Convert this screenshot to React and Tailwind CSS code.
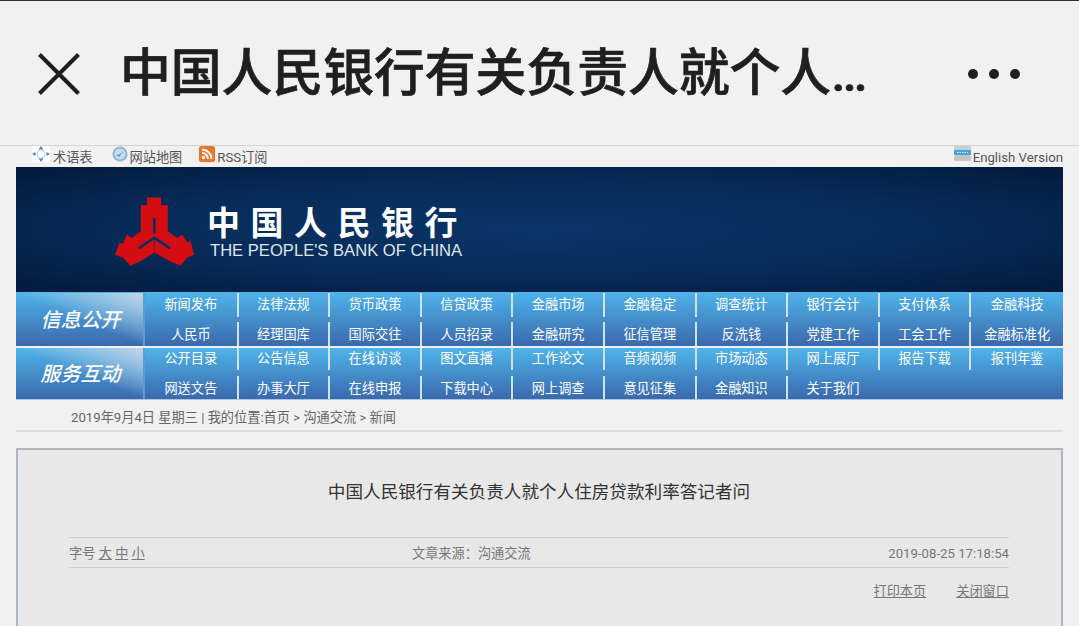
const font = "font-['Roboto','Noto_Sans_CJK_SC',sans-serif]";

const navRows = [
    {
        label: '信息公开',
        rows: [
            { height: 'h-[24px]', items: ['新闻发布', '法律法规', '货币政策', '信贷政策', '金融市场', '金融稳定', '调查统计', '银行会计', '支付体系', '金融科技'] },
            { height: 'h-[24px] pt-[2px]', items: ['人民币', '经理国库', '国际交往', '人员招录', '金融研究', '征信管理', '反洗钱', '党建工作', '工会工作', '金融标准化'] },
        ],
    },
    {
        label: '服务互动',
        rows: [
            { height: 'h-[22px]', items: ['公开目录', '公告信息', '在线访谈', '图文直播', '工作论文', '音频视频', '市场动态', '网上展厅', '报告下载', '报刊年鉴'] },
            { height: 'h-[23px] pt-[2px]', items: ['网送文告', '办事大厅', '在线申报', '下载中心', '网上调查', '意见征集', '金融知识', '关于我们', '', ''] },
        ],
    },
];

function TermIcon() {
    return (
        <svg width="18" height="16" viewBox="0 0 18 16" className="bg-white">
            <path d="M9 0l2.5 3.5h-5zM9 16l-2.5-3.5h5zM0 8l3.5-2v4zM18 8l-3.5 2V6z" fill="#4a86c8" />
            <path d="M5 8a4 4 0 0 1 8 0a4 4 0 0 1-8 0" fill="none" stroke="#b9cfe6" strokeWidth="1" />
        </svg>
    );
}

function GlobeIcon() {
    return (
        <svg width="16" height="16" viewBox="0 0 16 16">
            <circle cx="8" cy="8" r="7.5" fill="#8fb6d8" />
            <circle cx="8" cy="8" r="5.5" fill="#c9dcee" />
            <path d="M4 9l3 2 5-6-4 3z" fill="#6f9fc8" />
        </svg>
    );
}

function RssIcon() {
    return (
        <svg width="16" height="16" viewBox="0 0 16 16">
            <rect width="16" height="16" rx="2.5" fill="#e8762b" />
            <circle cx="4.5" cy="11.5" r="1.7" fill="#fff" />
            <path d="M3 7a6 6 0 0 1 6 6M3 3.5a9.5 9.5 0 0 1 9.5 9.5" fill="none" stroke="#fff" strokeWidth="1.9" />
        </svg>
    );
}

function KeyboardIcon() {
    return (
        <svg width="17" height="15" viewBox="0 0 17 15">
            <rect y="0" width="17" height="5" rx="1.5" fill="#c9ccd0" />
            <rect y="4" width="17" height="5" rx="1" fill="#45a5df" />
            <rect y="9" width="17" height="6" rx="1.5" fill="#c4c6c8" />
            <path d="M3 6.5h11" stroke="#d5eaf7" strokeWidth="1" strokeDasharray="1.5 1" />
        </svg>
    );
}

function BankLogo() {
    return (
        <svg width="79" height="70" viewBox="105 85 235 205" className="shrink-0 mt-[4px]">
            <path
                d="M200 85H242V108H262V185L290 205L305 195L320 218L330 215L340 255L318 265L300 288L270 275L225 250H220L180 275L150 288L130 265L105 255L118 220L130 222L140 195L155 205L182 185V108H200Z"
                fill="#d40d12"
            />
            <path d="M222 150V188M222 205L178 234M222 205L266 234" stroke="#0a2f5f" strokeWidth="8" strokeLinecap="round" fill="none" />
            <path d="M222 205V250" stroke="#0a2f5f" strokeWidth="2" fill="none" />
        </svg>
    );
}

function NavBlock({ label, rows, className }) {
    return (
        <div className={`flex bg-gradient-to-b from-[#4fb4ea] to-[#3a69ad] ${className}`}>
            <div className="w-[129px] shrink-0 flex items-center justify-center bg-gradient-to-tr from-transparent via-transparent to-[#c5d3e5] border-r-2 border-[#5f9ad2]">
                <span className="text-[20px] italic font-medium text-white ml-[2px]">{label}</span>
            </div>
            <div className="flex-1 flex flex-col justify-between">
                {rows.map((row, i) => (
                    <div key={i} className={`grid grid-cols-[repeat(9,91.6px)_1fr] ${row.height.split(' ')[0]}`}>
                        {row.items.map((item, j) => (
                            <div
                                key={j}
                                className={`flex items-center justify-center text-[13.2px] text-white ${i === 1 ? 'pt-[2px]' : ''} ${j > 0 && item ? 'border-l-2 border-[#cfe3f3]' : ''}`}
                            >
                                {item}
                            </div>
                        ))}
                    </div>
                ))}
            </div>
        </div>
    );
}

export default function App() {
    return (
        <div className={`w-[1079px] h-[626px] overflow-hidden bg-[#f1f1f1] text-[#555] ${font}`}>
            {/* App bar */}
            <div className="h-[146px] pt-[2px] border-t border-[#333] border-b border-b-[#d4d4d4] flex items-center pl-[38px] pr-[59px]">
                <svg width="42" height="42" viewBox="0 0 42 42" className="shrink-0">
                    <path d="M1.5 1.5L40.5 40.5M40.5 1.5L1.5 40.5" stroke="#1f1f1f" strokeWidth="4" />
                </svg>
                <div className="ml-[40px] w-[755px] truncate text-[50.8px] font-medium [-webkit-text-stroke:0.7px_#1f1f1f] text-[#1f1f1f] leading-[60px]">
                    中国人民银行有关负责人就个人住房贷款利率答记者问
                </div>
                <div className="ml-auto flex gap-[11px]">
                    <span className="w-[10px] h-[10px] rounded-full bg-[#1f1f1f]"></span>
                    <span className="w-[10px] h-[10px] rounded-full bg-[#1f1f1f]"></span>
                    <span className="w-[10px] h-[10px] rounded-full bg-[#1f1f1f]"></span>
                </div>
            </div>

            {/* Toolbar */}
            <div className="h-[21px] flex items-start justify-between pl-[32px] pr-[16px] text-[13.2px]">
                <div className="flex gap-[19px] leading-[23px]">
                    <span className="flex gap-[3px]"><TermIcon />术语表</span>
                    <span className="flex gap-[2px]"><GlobeIcon />网站地图</span>
                    <span className="flex gap-[2px] -ml-[2px]"><RssIcon />RSS订阅</span>
                </div>
                <span className="flex gap-[2px] leading-[24px]"><KeyboardIcon />English Version</span>
            </div>

            <div className="mx-[16px]">
                {/* Banner */}
                <div className="h-[125px] flex items-center pl-[99px] bg-[radial-gradient(ellipse_at_center,#0a3567_0%,#072b58_55%,#021a3c_100%)]">
                    <BankLogo />
                    <div className="ml-[16px] mt-[3px] flex flex-col text-white">
                        <span className="-ml-[3px] text-[33px] font-bold leading-[40px] tracking-[10.5px] font-['Noto_Sans_CJK_SC',sans-serif]">中国人民银行</span>
                        <span className="text-[16.6px] leading-[20px] text-[#dfe5ec] font-['Liberation_Sans',sans-serif]">THE PEOPLE'S BANK OF CHINA</span>
                    </div>
                </div>

                {/* Nav */}
                <NavBlock {...navRows[0]} className="h-[54px] pt-[1px]" />
                <NavBlock {...navRows[1]} className="h-[52px] mt-[2px] border-b border-[#a9c6e4]" />

                {/* Breadcrumb */}
                <div className="h-[32px] border-b-2 border-[#dedede] pl-[55px] pt-[8px] text-[13.2px] leading-[20px] text-[#666]">
                    2019年9月4日 星期三 | 我的位置:首页 &gt; 沟通交流 &gt; 新闻
                </div>

                {/* Article */}
                <div className="mt-[16px] h-[200px] border-2 border-[#aeb6c2] bg-[#e8e8e8] pl-[51px] pr-[52px]">
                    <h1 className="pt-[28px] h-[87px] text-center text-[17.6px] leading-[28px] text-[#333]">
                        中国人民银行有关负责人就个人住房贷款利率答记者问
                    </h1>
                    <div className="h-[31px] pt-[2px] border-y border-[#d0d0d0] flex items-center text-[13.2px] text-[#777]">
                        <div className="w-[343px]">
                            字号 <span className="underline">大</span> <span className="underline">中</span> <span className="underline">小</span>
                        </div>
                        <div>文章来源：沟通交流</div>
                        <div className="ml-auto">2019-08-25 17:18:54</div>
                    </div>
                    <div className="flex justify-end gap-[30px] pt-[14px] text-[13.2px] text-[#777]">
                        <span className="underline">打印本页</span>
                        <span className="underline">关闭窗口</span>
                    </div>
                </div>
            </div>
        </div>
    );
}
